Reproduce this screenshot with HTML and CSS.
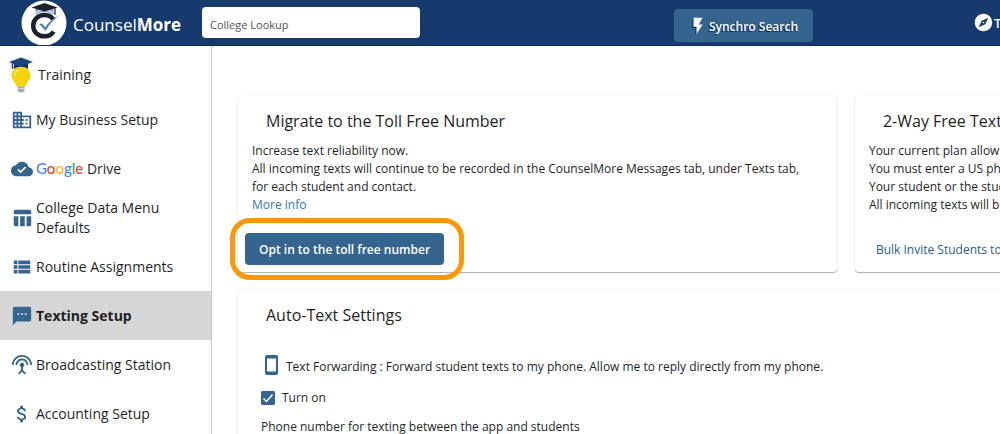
FILE: index.html
```html
<!DOCTYPE html>
<html lang="en">
<head>
<meta charset="UTF-8">
<meta name="viewport" content="width=device-width, initial-scale=1.0">
<title>CounselMore - Texting Setup</title>
<link rel="stylesheet" href="styles.css">
</head>
<body>
  <header class="topbar">
    <a class="brand" href="#">
      <svg class="brand-logo" viewBox="0 0 46 46" aria-hidden="true">
        <circle cx="23" cy="23" r="22.5" fill="#fff"/>
        <path d="M32.500 20C31 17 28 15 23.500 15c-6.500 0-11.300 4.600-11.300 10.700S17 36.300 23.500 36.300c4 0 7.500-1.800 9-4.800" fill="none" stroke="#1b222c" stroke-width="4.500"/>
        <path d="M14.500 8v6.500c5-3.500 13-3.500 18 0V8z" fill="#7fa3cd"/>
        <path d="M15 12.500c5-3 12-3 17 0" fill="none" stroke="#fff" stroke-width="1"/>
        <path d="M10.500 7.500L23.500 3 36.500 7.500l-13 4z" fill="#1b222c"/>
        <path d="M34 8v7" stroke="#1b222c" stroke-width="1.200"/>
        <path d="M18 24l3.200-.6 3 3.600c3-4.500 7-8.500 13.500-11.500-5.500 4.500-9.500 9-13 15.500z" fill="#5587bd"/>
      </svg>
      <span class="brand-name">Counsel<b>More</b></span>
    </a>
    <input class="lookup" type="text" placeholder="College Lookup" aria-label="College Lookup">
    <button class="synchro" type="button">
      <svg viewBox="0 0 24 24" aria-hidden="true"><path d="M6 1v12h4v10l8-13h-5l5-9z"/></svg>
      Synchro Search
    </button>
    <a class="tour" href="#">
      <svg viewBox="0 0 24 24" aria-hidden="true"><path d="M12 10.900c-.61 0-1.100.49-1.100 1.100s.49 1.100 1.100 1.100c.61 0 1.100-.49 1.100-1.100s-.49-1.100-1.100-1.100zM12 1C5.900 1 1 5.900 1 12s4.900 11 11 11 11-4.900 11-11S18.100 1 12 1zm2.190 13.190L6 18l3.810-8.190L18 6l-3.810 8.190z"/></svg>
      Tour
    </a>
  </header>

  <div class="page">
    <nav class="sidebar">
      <a class="item training" href="#">
        <svg class="bulb" viewBox="0 0 24 36" aria-hidden="true">
          <path d="M12 9.500c-5.500 0-9.500 4-9.500 9 0 4.500 4 6 5 11h9c1-5 5-6.500 5-11 0-5-4-9-9.500-9z" fill="#f6d20b"/>
          <path d="M5.500 19c0-3 1.500-5 4-6" fill="none" stroke="#fff3a0" stroke-width="1.200"/>
          <path d="M8.500 29.500h7V34l-2 1.500h-3L8.500 34z" fill="#a9adb1"/>
          <path d="M8.500 31.500h7" stroke="#d5d8da"/>
          <path d="M5 5v7c4-3 10-3 14 0V5z" fill="#123463"/>
          <path d="M0 5l12-4.500L24 5 12 9.500z" fill="#1b467c"/>
          <path d="M3.500 5.500V12" stroke="#1b467c" stroke-width="1.500"/>
        </svg>
        <span>Training</span>
      </a>
      <a class="item" href="#">
        <svg class="icon" viewBox="0 0 24 24" aria-hidden="true"><path d="M12 7V3H2v18h20V7H12zM6 19H4v-2h2v2zm0-4H4v-2h2v2zm0-4H4V9h2v2zm0-4H4V5h2v2zm4 12H8v-2h2v2zm0-4H8v-2h2v2zm0-4H8V9h2v2zm0-4H8V5h2v2zm10 12h-8v-2h2v-2h-2v-2h2v-2h-2V9h8v10zm-2-8h-2v2h2v-2zm0 4h-2v2h2v-2z"/></svg>
        <span>My Business Setup</span>
      </a>
      <a class="item" href="#">
        <svg class="icon" viewBox="0 0 24 24" aria-hidden="true"><path d="M19.350 10.040C18.670 6.590 15.640 4 12 4 9.110 4 6.600 5.640 5.350 8.040 2.340 8.360 0 10.910 0 14c0 3.310 2.690 6 6 6h13c2.760 0 5-2.240 5-5 0-2.640-2.050-4.780-4.650-4.960zM10.500 16.500l-3.500-3.500 1.200-1.200 2.300 2.300 4.800-4.800 1.200 1.200z"/></svg>
        <span><span class="google"><i class="g-blue">G</i><i class="g-red">o</i><i class="g-yellow">o</i><i class="g-blue">g</i><i class="g-green">l</i><i class="g-red">e</i></span> Drive</span>
      </a>
      <a class="item" href="#">
        <svg class="icon" viewBox="0 0 24 24" aria-hidden="true"><path d="M10 10h5v11h-5V10zM17 21h3c1.100 0 2-.9 2-2v-9h-5v11zm3-18H5c-1.100 0-2 .9-2 2v3h19V5c0-1.100-.9-2-2-2zM3 19c0 1.100.9 2 2 2h3V10H3v9z"/></svg>
        <span>College Data Menu Defaults</span>
      </a>
      <a class="item" href="#">
        <svg class="icon" viewBox="0 0 24 24" aria-hidden="true"><path d="M3 14h4v-4H3v4zm0 5h4v-4H3v4zM3 9h4V5H3v4zm5 5h13v-4H8v4zm0 5h13v-4H8v4zM8 5v4h13V5H8z"/></svg>
        <span>Routine Assignments</span>
      </a>
      <a class="item active" href="#">
        <svg class="icon" viewBox="0 0 24 24" aria-hidden="true"><path d="M20 2H4c-1.100 0-1.990.9-1.990 2L2 22l4-4h14c1.100 0 2-.9 2-2V4c0-1.100-.9-2-2-2zM9 11H7V9h2v2zm4 0h-2V9h2v2zm4 0h-2V9h2v2z"/></svg>
        <span>Texting Setup</span>
      </a>
      <a class="item" href="#">
        <svg class="icon" viewBox="0 0 24 24" aria-hidden="true"><path d="M12 5c-3.870 0-7 3.130-7 7h2c0-2.760 2.240-5 5-5s5 2.240 5 5h2c0-3.870-3.130-7-7-7zm1 9.290c.88-.39 1.500-1.260 1.500-2.290 0-1.380-1.120-2.500-2.500-2.500S9.500 10.620 9.500 12c0 1.020.62 1.900 1.500 2.290v3.300L7.590 21 9 22.410l3-3 3 3L16.410 21 13 17.590v-3.300zM12 1C5.930 1 1 5.930 1 12h2c0-4.970 4.030-9 9-9s9 4.030 9 9h2c0-6.070-4.930-11-11-11z"/></svg>
        <span>Broadcasting Station</span>
      </a>
      <a class="item" href="#">
        <svg class="icon" viewBox="0 0 24 24" aria-hidden="true"><path d="M11.800 10.900c-2.270-.59-3-1.200-3-2.150 0-1.090 1.010-1.850 2.700-1.850 1.780 0 2.440.85 2.500 2.100h2.210c-.07-1.720-1.120-3.300-3.210-3.810V3h-3v2.160c-1.940.42-3.500 1.680-3.500 3.610 0 2.310 1.910 3.460 4.700 4.130 2.500.6 3 1.480 3 2.410 0 .69-.49 1.790-2.700 1.790-2.060 0-2.870-.92-2.980-2.100h-2.200c.12 2.190 1.760 3.420 3.680 3.830V21h3v-2.150c1.950-.37 3.500-1.500 3.500-3.550 0-2.840-2.430-3.810-4.700-4.400z"/></svg>
        <span>Accounting Setup</span>
      </a>
    </nav>

    <main class="content">
      <section class="card">
        <h2>Migrate to the Toll Free Number</h2>
        <p>Increase text reliability now.<br>
          All incoming texts will continue to be recorded in the CounselMore Messages tab, under Texts tab,<br>
          for each student and contact.<br>
          <a class="more" href="#">More info</a></p>
        <div class="highlight">
          <button class="optin" type="button">Opt in to the toll free number</button>
        </div>
      </section>

      <section class="card">
        <h2>2-Way Free Texting</h2>
        <p>Your current plan allows 2-way texting.<br>
          You must enter a US phone number.<br>
          Your student or the student's contact can reply.<br>
          All incoming texts will be recorded.</p>
        <a class="bulk" href="#">Bulk Invite Students to Text</a>
      </section>

      <section class="card settings">
        <h2>Auto-Text Settings</h2>
        <div class="forwarding">
          <svg viewBox="0 0 14 20" aria-hidden="true"><path d="M2 0h9a2 2 0 0 1 2 2v16a2 2 0 0 1-2 2H2a2 2 0 0 1-2-2V2a2 2 0 0 1 2-2zm0 3.500v13h9v-13z"/></svg>
          <span>Text Forwarding : Forward student texts to my phone. Allow me to reply directly from my phone.</span>
        </div>
        <label class="toggle" for="turnOn"><input type="checkbox" id="turnOn" checked> Turn on</label>
        <div class="phone">Phone number for texting between the app and students</div>
      </section>
    </main>
  </div>
</body>
</html>
```
FILE: styles.css
```css
* {
  box-sizing: border-box;
}

body {
  margin: 0;
  min-height: 100vh;
  display: flex;
  flex-direction: column;
  overflow: hidden;
  font-family: "Open Sans", "Noto Sans", sans-serif;
  font-size: 12px;
  color: #1f1f1f;
  background: #fff;
}

a {
  text-decoration: none;
}

button,
input {
  font-family: inherit;
}

.topbar {
  display: flex;
  align-items: center;
  height: 46px;
  padding-left: 21px;
  background: #163a6e;
  border-bottom: 1px solid #0a2b5c;
  overflow: hidden;
}

.brand {
  display: flex;
  align-items: center;
  gap: 6px;
  flex: none;
  width: 181px;
  color: #fff;
}

.brand-logo {
  width: 46px;
  height: 46px;
  flex: none;
}

.brand-name {
  font-size: 17px;
  padding-top: 4px;
}

.lookup {
  width: 218px;
  height: 31px;
  padding: 4px 8px 0;
  border: none;
  border-radius: 4px;
  background: #fff;
  font-size: 11px;
}

.lookup::placeholder {
  color: #555;
  opacity: 1;
}

.synchro {
  display: flex;
  align-items: center;
  justify-content: center;
  gap: 2px;
  width: 139px;
  height: 33px;
  margin-left: auto;
  margin-top: 5px;
  padding: 2px 0 0;
  border: none;
  border-radius: 4px;
  background: #35658f;
  color: #fff;
  font-size: 12px;
  font-weight: 600;
  text-shadow: -1px 1px 1px #0a2347;
  cursor: pointer;
}

.synchro svg {
  width: 18px;
  height: 18px;
  fill: #fff;
  filter: drop-shadow(-1px 1px 0 #0a2347);
}

.tour {
  display: flex;
  align-items: center;
  gap: 1px;
  flex: none;
  width: 26px;
  margin-left: 161px;
  color: #fff;
  font-size: 13px;
  font-weight: 600;
}

.tour svg {
  width: 19px;
  height: 19px;
  flex: none;
  fill: #fff;
}

.page {
  display: flex;
  flex: 1;
}

.sidebar {
  flex: none;
  width: 212px;
  border-right: 1px solid #ccc;
}

.item {
  display: flex;
  align-items: center;
  gap: 3px;
  height: 49px;
  padding: 0 24px 0 11px;
  color: #1f1f1f;
  font-size: 14px;
  line-height: 20px;
}

.item.training {
  gap: 5px;
  padding: 8px 0 0 9px;
}

.item.active {
  background: #d6d6d6;
  font-weight: 700;
}

.bulb {
  width: 24px;
  height: 36px;
}

.icon {
  width: 22px;
  height: 22px;
  flex: none;
  fill: #35658f;
}

.google {
  font-family: Lato, sans-serif;
  font-size: 15px;
  font-weight: 500;
}

.google i {
  font-style: normal;
}

.g-blue { color: #4285f4; }
.g-red { color: #ea4335; }
.g-yellow { color: #fbbc05; }
.g-green { color: #34a853; }

.content {
  flex: 1;
  min-width: 0;
  display: grid;
  grid-template-columns: 78.6% 78.6%;
  grid-template-rows: auto 1fr;
  gap: 18px;
  padding: 50px 0 0 26px;
  overflow: hidden;
}

.card {
  padding: 14px;
  border-radius: 4px;
  background: #fff;
  box-shadow: 0 1px 1px rgba(0, 0, 0, 0.3), 0 0 2px rgba(0, 0, 0, 0.1);
  white-space: nowrap;
}

.card h2 {
  margin: 0 0 10px;
  padding-left: 14px;
  font-size: 16px;
  font-weight: 500;
  line-height: 22px;
}

.card p {
  margin: 0;
  line-height: 18px;
}

.more {
  color: #337ab7;
}

.highlight {
  position: relative;
  width: fit-content;
  margin: 19px 0 -7px -7px;
}

/* orange ring round the opt-in button */
.highlight::after {
  content: "";
  position: absolute;
  inset: -15px -20px -15px -15px;
  border: 5px solid #ff9708;
  border-radius: 20px;
  pointer-events: none;
}

.optin {
  height: 32px;
  padding: 0 14px;
  border: none;
  border-radius: 4px;
  background: #35658f;
  color: #fff;
  font-size: 12px;
  font-weight: 600;
  cursor: pointer;
}

.bulk {
  display: block;
  margin-top: 27px;
  padding-left: 7px;
  color: #2a5d8f;
  font-weight: 500;
}

.settings {
  grid-column: 1 / -1;
}

.forwarding {
  display: flex;
  align-items: center;
  gap: 7px;
  margin-top: 28px;
  padding-left: 13px;
}

.forwarding span {
  padding-top: 4px;
}

.forwarding svg {
  width: 14px;
  height: 20px;
  fill: #35658f;
}

.toggle {
  display: flex;
  align-items: center;
  gap: 7px;
  margin-top: 14px;
  padding-left: 9px;
  font-weight: 500;
}

.toggle input {
  appearance: none;
  width: 14px;
  height: 14px;
  margin: 0;
  border-radius: 1px;
  border: 1px solid #35658f;
}

.toggle input:checked {
  background: #35658f url("data:image/svg+xml,%3Csvg xmlns='http://www.w3.org/2000/svg' viewBox='0 0 12 12'%3E%3Cpath d='M1.500 6.500l3 3 6-7' fill='none' stroke='white' stroke-width='1.500'/%3E%3C/svg%3E") center / 12px no-repeat;
}

.phone {
  margin-top: 12px;
  padding-left: 9px;
}
```
